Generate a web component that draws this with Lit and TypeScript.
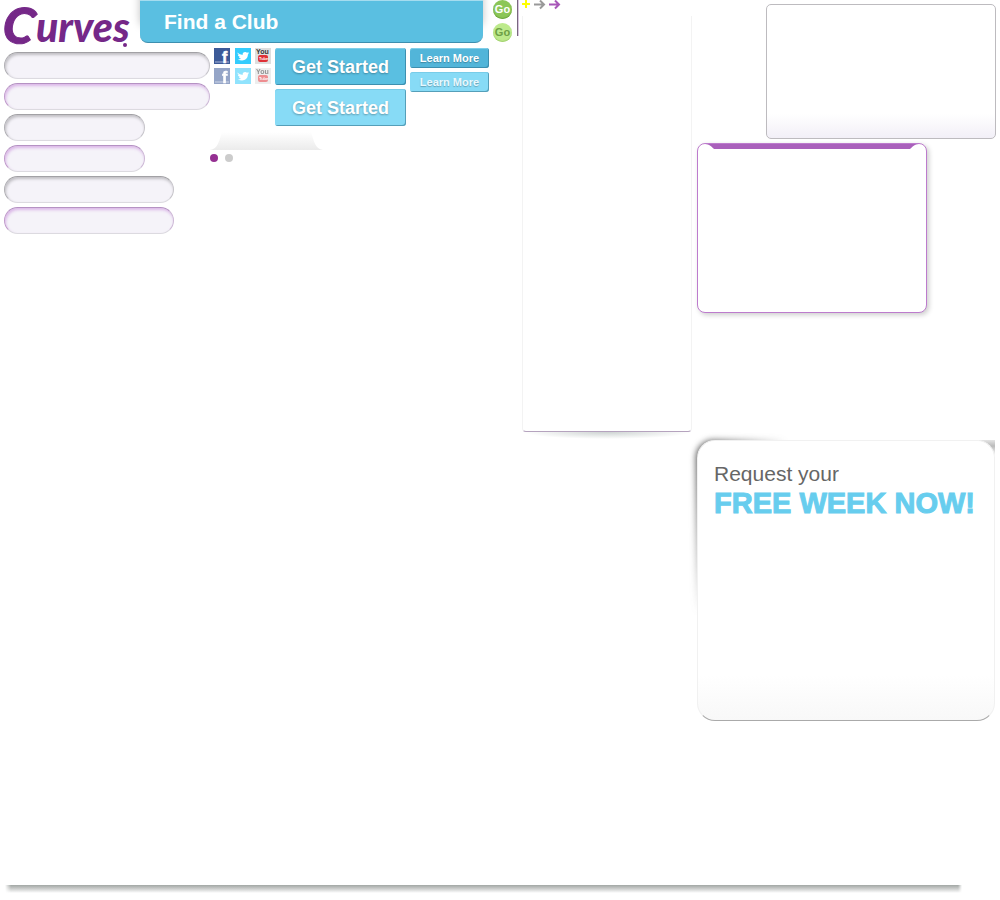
import { LitElement, html, css, svg } from "lit";
import { customElement, property } from "lit/decorators.js";
import { classMap } from "lit/directives/class-map.js";

const FIELDS = [
  { size: "wide", focus: false },
  { size: "wide", focus: true },
  { size: "short", focus: false },
  { size: "short", focus: true },
  { size: "medium", focus: false },
  { size: "medium", focus: true },
];

@customElement("curves-logo")
export class CurvesLogo extends LitElement {
  static styles = css`
    :host { display: block; width: 140px; height: 48px; flex: none; }
    svg { display: block; overflow: visible; }
    .mark { font-family: Lato, "Liberation Sans", sans-serif; font-weight: 900; font-style: italic; fill: #752888; }
    .initial { font-size: 50px; stroke: #752888; stroke-width: 1px; }
    .rest { font-size: 41px; }
    .reg { fill: #752888; }
  `;
  render() {
    return html`<svg width="140" height="48" viewBox="0 0 140 48" role="img" aria-label="Curves">
      <text class="mark initial" x="1" y="41" transform="rotate(8 1 41)">C</text>
      <text class="mark rest" x="36" y="42">urves</text>
      <circle class="reg" cx="125" cy="45" r="2" />
    </svg>`;
  }
}

@customElement("social-link")
export class SocialLink extends LitElement {
  @property() network = "facebook";
  @property({ type: Boolean }) faded = false;
  static styles = css`
    :host { display: block; width: 16px; height: 16px; }
    a { display: block; }
    svg { display: block; overflow: visible; }
    .faded { opacity: 0.54; }
    .f { font: bold 16px "Liberation Sans", sans-serif; fill: #fff; stroke: #fff; stroke-width: 0.5px; }
    .you { font: bold 7px "Liberation Sans", sans-serif; fill: #333; }
    .tube { font: bold 4px "Liberation Sans", sans-serif; fill: #fff; }
  `;
  private art() {
    if (this.network === "facebook")
      return svg`<rect width="16" height="16" fill="#3c5a98"/><rect x="1" y="13" width="14" height="2" fill="#7388b8"/>
        <text class="f" x="8" y="15">f</text>`;
    if (this.network === "twitter")
      return svg`<rect width="16" height="16" fill="#34ccfd"/>
        <path fill="#fff" d="M2.500 4.600C4 6 5.600 6.800 7.600 6.900C7.400 5.200 8.600 4 10.100 4C10.900 4 11.500 4.300 12 4.800L13.800 4.100L13 5.400L14.200 5.200L12.900 6.600C12.900 10.200 10.300 12.500 7.100 12.500C5.500 12.500 4.200 12.200 3 11.500C4.200 11.500 5.200 11.300 6.100 10.600C4.900 10.500 4.200 9.900 3.900 9L5 9C3.700 8.500 3 7.700 2.900 6.700L3.900 6.900C2.900 6.300 2.500 5.500 2.500 4.600Z"/>`;
    return svg`<rect width="16" height="16" fill="#dedede"/>
        <text class="you" x="1" y="6">You</text>
        <rect x="3" y="7" width="10" height="7" rx="2" fill="#df3036"/>
        <text class="tube" x="4" y="12">Tube</text>`;
  }
  render() {
    return html`<a href="#" aria-label=${this.network}>
      <svg class=${classMap({ faded: this.faded })} width="16" height="16" viewBox="0 0 16 16">${this.art()}</svg>
    </a>`;
  }
}

@customElement("app-root")
export class AppRoot extends LitElement {
  static styles = css`
    :host {
      display: flex;
      flex-direction: column;
      min-height: 100vh;
      box-sizing: border-box;
      background: #fff;
      font-family: "Liberation Sans", Arial, sans-serif;
    }
    * { box-sizing: border-box; }
    button { font-family: inherit; font-weight: bold; padding: 0; margin: 0; border: 0; cursor: pointer; display: block; }
    .page { display: flex; align-items: flex-start; }
    .left { flex: 1 1 489px; min-width: 0; }
    .header { display: flex; height: 48px; }
    .finder {
      flex: 1;
      height: 43px;
      margin: 0 6px 0 0;
      padding-left: 24px;
      font-size: 21px;
      line-height: 42px;
      color: #fff;
      background: #5abfe1;
      border-top: 1px solid #a5dcef;
      border-bottom: 1px solid #3d8faf;
      border-radius: 0 0 8px 8px;
      box-shadow: 0 -16px 8px rgba(0, 0, 0, 0.25);
    }
    .body { display: flex; align-items: flex-start; }
    .fields { display: flex; flex-direction: column; gap: 4px; width: 210px; padding: 4px 0 0 4px; flex: none; }
    .field {
      height: 27px;
      padding: 0 14px;
      font: 13px "Liberation Sans", sans-serif;
      background: #f5f3f9;
      border: 1px solid;
      border-color: #a2a1a5 #c6c4ca #dcdae0 #b0afb4;
      border-radius: 14px;
      outline: 0;
      box-shadow: inset 1px 2px 3px rgba(0, 0, 0, 0.22);
    }
    .field.focus {
      border-color: #b592c3 #cdb8d6 #dcdae0 #c09acb;
      box-shadow: inset 1px 2px 3px rgba(170, 70, 200, 0.34);
    }
    .wide { width: 206px; }
    .short { width: 141px; }
    .medium { width: 170px; }
    .tools { display: flex; align-items: flex-start; gap: 4px; padding-left: 4px; }
    .social { display: grid; grid-template-columns: repeat(3, 16px); justify-content: space-between; row-gap: 4px; width: 57px; }
    .stack { display: flex; flex-direction: column; gap: 4px; }
    .cta {
      width: 131px;
      height: 37px;
      padding-top: 1px;
      font-size: 18px;
      color: #fff;
      background: #5abfe1;
      border-radius: 3px;
      text-shadow: 0 1px 2px rgba(0, 0, 0, 0.3);
      box-shadow: inset -1px -1px #3d8faf, inset 0 1px #80cfe9;
    }
    .small { width: 79px; height: 20px; padding: 0; font-size: 11px; background: #52b5d9; text-shadow: 0 1px 1px rgba(0, 0, 0, 0.25); }
    .light { background: #87dbf6; box-shadow: inset -1px -1px #559fb9, inset 0 1px #78cce8; }
    .small.light { color: #e8f8fe; }
    .tab { display: block; margin-top: 6px; }
    .dots { display: flex; gap: 7px; margin-top: 4px; }
    .dot { width: 8px; height: 8px; border-radius: 50%; background: #ccc; }
    .dot.on { background: #953092; }
    .gos { display: flex; flex-direction: column; gap: 4px; width: 24px; margin-left: 4px; }
    .go {
      width: 19px;
      height: 19px;
      border-radius: 50%;
      font-size: 11px;
      line-height: 19px;
      color: #fff;
      background: #8cc657;
      box-shadow: inset 0 -1px 1px #6da53e;
    }
    .go.pale { color: #6da045; background: #bdea8c; box-shadow: inset 0 -1px 1px #a2d070; }
    .rule { width: 2px; height: 36px; background: linear-gradient(to right, #78677f 50%, #d8c4df 50%); }
    .middle { width: 170px; margin-left: 3px; }
    .arrows { display: block; height: 16px; }
    .panel {
      position: relative;
      height: 416px;
      border: 1px solid #f3f3f3;
      border-top: 0;
      border-bottom-color: #b5a3be;
      border-radius: 0 0 4px 4px;
    }
    .panel::after {
      content: "";
      position: absolute;
      top: 100%;
      left: 0;
      right: 0;
      height: 7px;
      margin-top: 1px;
      background: radial-gradient(ellipse 50% 100% at 50% 0, rgba(90, 110, 105, 0.3), transparent);
    }
    .right { width: 299px; margin: 4px 4px 0 5px; display: flex; flex-direction: column; }
    .box {
      align-self: flex-end;
      width: 230px;
      height: 135px;
      border: 1px solid #bdbbbf;
      border-radius: 5px;
      background: linear-gradient(to bottom, #fff 82%, #f2eff7);
    }
    .feature {
      width: 230px;
      height: 170px;
      margin-top: 4px;
      border: 1px solid #bd7bcd;
      border-radius: 8px;
      background: #fff;
      box-shadow: 2px 2px 5px rgba(0, 0, 0, 0.2);
    }
    .feature svg { display: block; width: 100%; height: 5px; }
    .offer { position: relative; isolation: isolate; width: 298px; margin-top: 127px; }
    .offer::before {
      content: "";
      position: absolute;
      z-index: -1;
      inset: 0 8px auto -1px;
      height: 174px;
      border-radius: 18px 0 0 0;
      filter: blur(3px);
      background: radial-gradient(ellipse 90px 174px at 0 0, #444, transparent);
    }
    .offer::after {
      content: "";
      position: absolute;
      z-index: -2;
      top: 0;
      right: 0;
      width: 16px;
      height: 16px;
      background: linear-gradient(to bottom, #e4e4e4, #bbb 6px, #fff);
    }
    .card {
      height: 281px;
      padding: 21px 16px;
      border: 1px solid #f1f1f1;
      border-bottom-color: #aaa;
      border-radius: 18px;
      background: linear-gradient(to bottom, #fff 84%, #f8f8f8);
    }
    .ask { margin: 0; font-size: 21px; font-weight: normal; line-height: 24px; color: #666; white-space: nowrap; }
    .ask strong { display: block; font-size: 29px; line-height: 34px; color: #67cdee; -webkit-text-stroke: 1px #67cdee; }
    .footer {
      height: 8px;
      margin: auto 38px 7px 5px;
      background: linear-gradient(to bottom, #a2a7a4, #c5c7c6 40%, #fff);
      mask-image: linear-gradient(to right, transparent, #000 6px, #000 calc(100% - 4px), transparent);
    }
  `;

  render() {
    return html`
      <main class="page">
        <section class="left">
          <div class="header">
            <curves-logo></curves-logo>
            <h1 class="finder">Find a Club</h1>
          </div>
          <div class="body">
            <form class="fields">
              ${FIELDS.map(
                (f, i) => html`<input type="text" aria-label="Field ${i + 1}"
                  class=${classMap({ field: true, [f.size]: true, focus: f.focus })} />`
              )}
            </form>
            <div>
              <div class="tools">
                <div class="social">
                  ${[false, true].map((faded) =>
                    ["facebook", "twitter", "youtube"].map(
                      (n) => html`<social-link network=${n} ?faded=${faded}></social-link>`
                    )
                  )}
                </div>
                <div class="stack">
                  <button class="cta">Get Started</button>
                  <button class="cta light">Get Started</button>
                </div>
                <div class="stack">
                  <button class="cta small">Learn More</button>
                  <button class="cta small light">Learn More</button>
                </div>
              </div>
              <svg class="tab" width="113" height="18" viewBox="0 0 113 18">
                <defs>
                  <linearGradient id="fade" x1="0" y1="0" x2="0" y2="1">
                    <stop offset="0" stop-color="#fff" /><stop offset="1" stop-color="#ebebeb" />
                  </linearGradient>
                </defs>
                <path fill="url(#fade)" d="M12 0H101C104 9 105 17 113 18H0C8 17 9 9 12 0Z" />
              </svg>
              <div class="dots"><span class="dot on"></span><span class="dot"></span></div>
            </div>
          </div>
        </section>
        <div class="gos">
          <button class="go">Go</button>
          <button class="go pale">Go</button>
        </div>
        <div class="rule"></div>
        <section class="middle">
          <svg class="arrows" width="42" height="16" viewBox="0 0 42 16" fill="none" stroke-width="2">
            <path stroke="#ffff00" d="M0 4H8M4 0V8" />
            <path stroke="#999" d="M12 4.500H22M18 0.500L22 4.500L18 8.500" />
            <path stroke="#a857b8" d="M27 4.500H37M33 0.500L37 4.500L33 8.500" />
          </svg>
          <div class="panel"></div>
        </section>
        <section class="right">
          <div class="box"></div>
          <div class="feature">
            <svg viewBox="0 0 228 5" preserveAspectRatio="none">
              <path fill="#a960bb" d="M7 0H221C217 0 214 3 212 5H16C14 3 11 0 7 0Z" />
            </svg>
          </div>
          <div class="offer">
            <div class="card">
              <h2 class="ask">Request your <strong>FREE WEEK NOW!</strong></h2>
            </div>
          </div>
        </section>
      </main>
      <footer class="footer"></footer>
    `;
  }
}
